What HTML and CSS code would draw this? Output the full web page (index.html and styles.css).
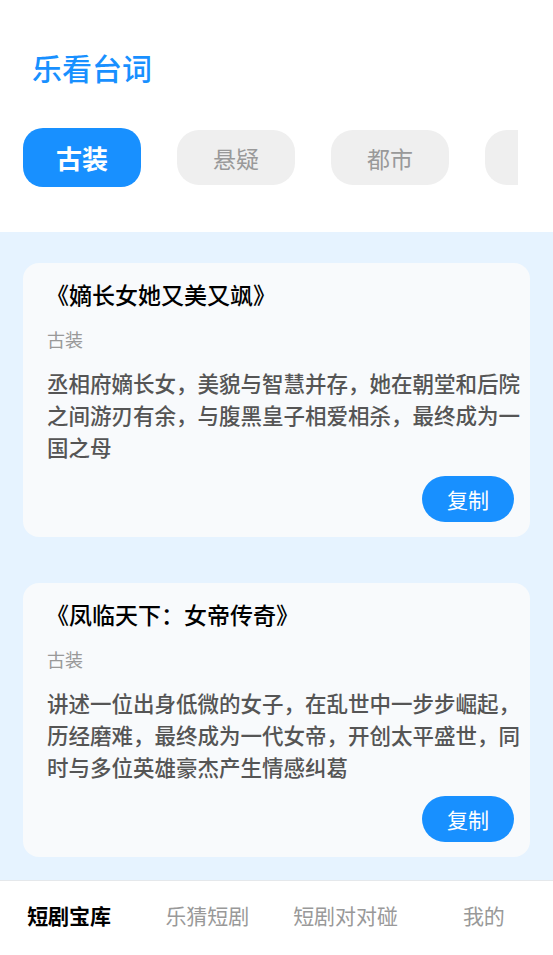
FILE: index.html
```html
<!DOCTYPE html>
<html lang="zh-CN">
<head>
<meta charset="utf-8">
<title>乐看台词</title>
<link rel="stylesheet" href="styles.css">
</head>
<body>
<div class="app">
  <header class="header">
    <h1 class="brand">乐看台词</h1>
    <div class="tabs">
      <div class="tab tab-active">古装</div>
      <div class="tab">悬疑</div>
      <div class="tab">都市</div>
      <div class="tab"></div>
    </div>
  </header>
  <main class="content">
    <section class="card">
      <h2 class="card-title">《嫡长女她又美又飒》</h2>
      <div class="card-tag">古装</div>
      <p class="card-desc">丞相府嫡长女，美貌与智慧并存，她在朝堂和后院之间游刃有余，与腹黑皇子相爱相杀，最终成为一国之母</p>
      <div class="card-actions"><button class="copy-btn">复制</button></div>
    </section>
    <section class="card">
      <h2 class="card-title">《凤临天下：女帝传奇》</h2>
      <div class="card-tag">古装</div>
      <p class="card-desc">讲述一位出身低微的女子，在乱世中一步步崛起，历经磨难，最终成为一代女帝，开创太平盛世，同时与多位英雄豪杰产生情感纠葛</p>
      <div class="card-actions"><button class="copy-btn">复制</button></div>
    </section>
  </main>
  <nav class="tabbar">
    <div class="tabbar-item tabbar-active">短剧宝库</div>
    <div class="tabbar-item">乐猜短剧</div>
    <div class="tabbar-item">短剧对对碰</div>
    <div class="tabbar-item">我的</div>
  </nav>
</div>
</body>
</html>
```

FILE: styles.css
```css
* { box-sizing: border-box; }
html, body {
  margin: 0;
  padding: 0;
  background: #ffffff;
  font-family: "Noto Sans CJK SC", "Noto Sans", sans-serif;
}
.app {
  width: 553px;
  height: 955px;
  display: flex;
  flex-direction: column;
  overflow: hidden;
}
.header {
  background: #ffffff;
  padding: 47px 0 45px 0;
  flex-shrink: 0;
}
.brand {
  margin: 0 0 0 32px;
  font-size: 30px;
  line-height: 40px;
  font-weight: 500;
  color: #1890ff;
}
.tabs {
  margin-top: 41px;
  margin-right: 35px;
  padding-left: 23px;
  display: flex;
  align-items: center;
  gap: 36px;
  overflow: hidden;
  height: 59px;
}
.tab {
  flex-shrink: 0;
  width: 118px;
  height: 55px;
  border-radius: 22px;
  background: #efefef;
  color: #999999;
  font-size: 23px;
  display: flex;
  align-items: center;
  justify-content: center;
}
.tab-active {
  height: 59px;
  border-radius: 20px;
  background: #1890ff;
  color: #ffffff;
  font-size: 26px;
  font-weight: 700;
}
.content {
  flex: 1;
  background: #e6f3ff;
  padding: 31px 23px 23px 23px;
  display: flex;
  flex-direction: column;
  gap: 46px;
  overflow: hidden;
}
.card {
  background: #f8fafc;
  border-radius: 16px;
  padding: 16px 10px 15px 24px;
  flex-shrink: 0;
}
.card-title {
  margin: 0;
  font-size: 23px;
  line-height: 30px;
  font-weight: 500;
  color: #000000;
  margin-left: -1px;
}
.card-tag {
  margin-top: 17px;
  font-size: 18px;
  line-height: 26px;
  color: #999999;
}
.card-desc {
  margin: 15px 0 0 0;
  font-size: 21.5px;
  line-height: 32px;
  font-weight: 500;
  color: #555555;
}
.card-actions {
  margin-top: 13px;
  display: flex;
  justify-content: flex-end;
  padding-right: 6px;
}
.copy-btn {
  width: 92px;
  height: 46px;
  border: none;
  border-radius: 23px;
  background: #1890ff;
  color: #ffffff;
  font-family: "Noto Sans CJK SC", "Noto Sans", sans-serif;
  font-size: 21px;
  padding: 0;
}
.tabbar {
  height: 75px;
  flex-shrink: 0;
  border-top: 1px solid #e5e8eb;
  background: #ffffff;
  display: grid;
  grid-template-columns: repeat(4, 1fr);
  align-items: center;
  padding-bottom: 7px;
}
.tabbar-item {
  text-align: center;
  font-size: 21px;
  color: #999999;
}
.tabbar-active {
  color: #000000;
  font-weight: 700;
}
```
